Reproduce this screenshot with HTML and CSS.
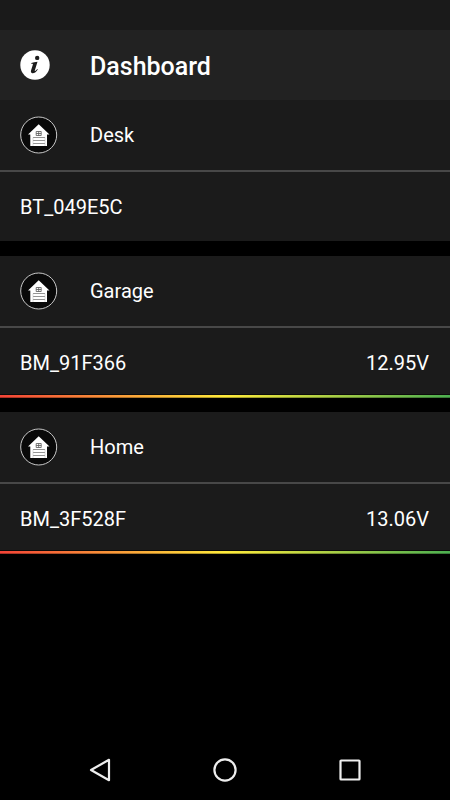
FILE: index.html
```html
<!DOCTYPE html>
<html lang="en">
<head>
<meta charset="utf-8">
<title>Dashboard</title>
<link rel="stylesheet" href="styles.css">
</head>
<body>
<svg class="symbols" aria-hidden="true">
  <symbol id="garage" viewBox="0 0 38 38">
    <circle cx="18.7" cy="19" r="18" fill="#090909" stroke="#c9c9c9" stroke-width="1"/>
    <path d="M18.7 8.3 29.5 18.6H27V30H10.3V18.6H8Z" fill="#fff"/>
    <path d="M16.2 15.5h5v4h-5zM18.7 15.5v4M16.2 17.5h5" fill="none" stroke="#555" stroke-width=".8"/>
    <path d="M13 21.5h12M13 24.5h12M13 27.5h12" stroke="#888" stroke-width=".9"/>
    <path d="M13 21.5V30M25 21.5V30" stroke="#bbb" stroke-width=".5"/>
  </symbol>
</svg>
<div class="status"></div>
<header class="bar">
  <svg class="info" viewBox="0 0 30 30">
    <circle cx="15" cy="15" r="14.7" fill="#fff"/>
    <circle cx="17.2" cy="7.9" r="2.2" fill="#1c1c1c"/>
    <path d="M11.4 13.1C13.1 12.6 15.1 12 17.5 11.8L14.8 20.4C14.5 21.5 15.4 21.1 17.2 18.9L17.8 19.4C15.8 22.4 13.9 23.5 12.3 23.2C10.8 22.9 10.7 21.7 11.1 20.3L12.9 14.6C13.2 13.8 12.4 13.8 11.2 13.9Z" fill="#1c1c1c"/>
  </svg>
  <h1>Dashboard</h1>
</header>
<main>
  <section class="card">
    <div class="head"><svg class="garage"><use href="#garage"/></svg><span>Desk</span></div>
    <div class="row"><span>BT_049E5C</span></div>
  </section>
  <section class="card">
    <div class="head"><svg class="garage"><use href="#garage"/></svg><span>Garage</span></div>
    <div class="row metered"><span>BM_91F366</span><span>12.95V</span></div>
  </section>
  <section class="card">
    <div class="head"><svg class="garage"><use href="#garage"/></svg><span>Home</span></div>
    <div class="row metered"><span>BM_3F528F</span><span>13.06V</span></div>
  </section>
</main>
<nav class="nav">
  <svg viewBox="0 0 30 30"><path d="M6 15 24 4.8V25.2Z"/></svg>
  <svg viewBox="0 0 30 30"><circle cx="15" cy="15" r="10.6"/></svg>
  <svg viewBox="0 0 30 30"><rect x="5.5" y="5.5" width="19" height="19" rx=".6"/></svg>
</nav>
</body>
</html>
```
FILE: styles.css
```css
* { box-sizing: border-box; }
body {
  margin: 0;
  height: 800px;
  display: flex;
  flex-direction: column;
  background: #000;
  color: #fff;
  font: 20px/24px Roboto, sans-serif;
}
.symbols { position: absolute; width: 0; height: 0; }
.status { height: 30px; background: #1a1a1a; }
.bar {
  height: 70px;
  padding-left: 20px;
  display: flex;
  align-items: center;
  background: #222;
}
.info { width: 30px; height: 30px; margin-right: 40px; }
h1 { margin: 4px 0 0; font-size: 25px; line-height: 30px; font-weight: 500; }
main { flex: 1; display: flex; flex-direction: column; gap: 15px; }
.card { height: 141px; background: #1b1b1b; }
.head {
  height: 72px;
  padding: 0 0 0 20px;
  display: flex;
  align-items: center;
  border-bottom: 2px solid #484848;
}
.garage { width: 38px; height: 38px; margin-right: 32px; }
.row {
  height: 69px;
  padding: 1px 21px 0 20px;
  display: flex;
  align-items: center;
  justify-content: space-between;
}
.metered { position: relative; height: 70px; padding-top: 0; }
.metered::after {
  content: "";
  position: absolute;
  left: 0;
  right: 0;
  bottom: 0;
  height: 3px;
  border-top: 0;
  box-shadow: 0 -1px #0b0b0b;
  background:
    linear-gradient(transparent 67%, rgba(0, 0, 0, .3) 67%),
    linear-gradient(90deg, #f44336, #ffeb3b 50%, #4caf50);
}
.nav {
  height: 60px;
  padding: 0 37.5px;
  display: flex;
  justify-content: space-around;
  align-items: center;
}
.nav svg { width: 30px; height: 30px; fill: none; stroke: #eee; stroke-width: 2.2; stroke-linejoin: round; }
```
